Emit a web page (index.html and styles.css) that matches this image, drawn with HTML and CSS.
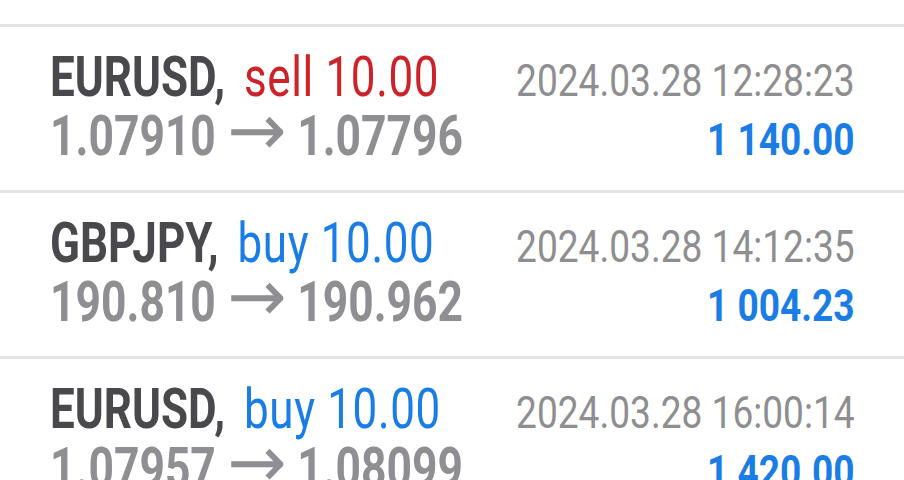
FILE: index.html
```html
<!DOCTYPE html>
<html lang="en">
<head>
<meta charset="utf-8">
<title>History</title>
<link rel="stylesheet" href="styles.css">
</head>
<body>
<div class="list">
  <div class="deal">
    <div class="cell left"><span class="sym">EURUSD,</span> <span class="sell">sell 10.00</span></div>
    <div class="cell right date">2024.03.28 12:28:23</div>
    <div class="cell left prices">1.07910 <span class="arrow">→</span> 1.07796</div>
    <div class="cell right profit">1 140.00</div>
  </div>
  <div class="deal">
    <div class="cell left"><span class="sym">GBPJPY,</span> <span class="buy">buy 10.00</span></div>
    <div class="cell right date">2024.03.28 14:12:35</div>
    <div class="cell left prices">190.810 <span class="arrow">→</span> 190.962</div>
    <div class="cell right profit">1 004.23</div>
  </div>
  <div class="deal">
    <div class="cell left"><span class="sym">EURUSD,</span> <span class="buy">buy 10.00</span></div>
    <div class="cell right date">2024.03.28 16:00:14</div>
    <div class="cell left prices">1.07957 <span class="arrow">→</span> 1.08099</div>
    <div class="cell right profit">1 420.00</div>
  </div>
</div>
</body>
</html>
```
FILE: styles.css
```css
html, body {
  margin: 0;
  padding: 0;
  background: #ffffff;
  overflow: hidden;
}
body {
  font-family: Roboto, "Liberation Sans", sans-serif;
  width: 904px;
  height: 480px;
}
.list {
  padding-top: 24px;
}
.deal {
  border-top: 3px solid #e4e4e4;
  padding: 21px 49px 24px 50px;
  display: grid;
  grid-template-columns: minmax(0, 1fr) auto;
  grid-template-rows: 59px 59px;
  align-items: baseline;
}
.cell {
  white-space: nowrap;
  line-height: 59px;
}
.left {
  font-size: 55px;
  transform: scaleX(0.8);
  transform-origin: left center;
}
.right {
  font-size: 44px;
  text-align: right;
  transform: scaleX(0.843);
  transform-origin: right center;
}
.sym {
  font-weight: 700;
  color: #48484d;
}
.sell,
.buy {
  display: inline-block;
  margin-left: 10px;
  letter-spacing: 0.8px;
}
.sell {
  color: #cc2229;
}
.buy {
  color: #1a7de5;
}
.prices {
  font-weight: 700;
  color: #8e8e93;
  transform: scaleX(0.808);
}
.arrow {
  display: inline-block;
  font-family: "DejaVu Sans", sans-serif;
  font-weight: 400;
  font-size: 72px;
  line-height: 0;
  margin: 0 6px 0 7px;
  transform: scaleX(1.22);
}
.date {
  color: #8e8e90;
}
.profit {
  font-weight: 700;
  color: #1a7de5;
}
```
